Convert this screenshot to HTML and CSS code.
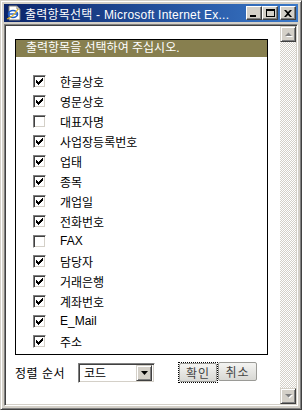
FILE: index.html
```html
<!DOCTYPE html>
<html lang="ko">
<head>
  <meta charset="UTF-8" />
  <title>출력항목선택</title>
  <link rel="stylesheet" href="styles.css">
</head>
<body>
  <div class="window">
    <div class="titlebar">
      <svg class="ie-icon" width="16" height="16" viewBox="0 0 16 16">
        <path d="M3 1h8l3 3v11H3z" fill="#fff" stroke="#808080"/>
        <path d="M11 1v3h3" fill="none" stroke="#808080"/>
        <ellipse cx="7" cy="9" rx="4.5" ry="3.5" fill="none" stroke="#1c5cc8" stroke-width="1.6"/>
        <path d="M3 9h8" stroke="#1c5cc8" stroke-width="1.4"/>
        <path d="M1 14c3-1 8-5 11-10" fill="none" stroke="#e8b820" stroke-width="1.2"/>
      </svg>
      <span class="title">출력항목선택 - Microsoft Internet Ex...</span>
      <div class="caption-btns">
        <span class="cbtn"><i class="min"></i></span>
        <span class="cbtn"><i class="max"></i></span>
        <span class="cbtn close">
          <svg width="8" height="7" viewBox="0 0 8 7"><path d="M0 0h2l2 2 2-2h2L5 3.5 8 7H6L4 5 2 7H0l3-3.5z" fill="#000"/></svg>
        </span>
      </div>
    </div>

    <div class="client">
      <div class="page">
        <div class="panel">
          <div class="panel-head">출력항목을 선택하여 주십시오.</div>
          <ul class="items" id="items"></ul>
        </div>
        <div class="sort-row">
          <span class="sort-label">정렬 순서</span>
          <div class="select">
            <span class="select-text">코드</span>
            <span class="select-btn">
              <svg width="7" height="4" viewBox="0 0 7 4"><path d="M0 0h7L3.5 4z" fill="#000"/></svg>
            </span>
          </div>
          <div class="btns">
            <span class="focus"><button class="btn ok">확인</button></span>
            <button class="btn">취소</button>
          </div>
        </div>
      </div>
      <div class="scrollbar">
        <span class="sbtn">
          <svg width="9" height="6" viewBox="0 0 9 6"><path d="M1 5h7L4.5 1.5z" fill="#fff" transform="translate(1 1)"/><path d="M1 5h7L4.5 1.5z" fill="#808080"/></svg>
        </span>
        <span class="track"></span>
        <span class="sbtn">
          <svg width="9" height="6" viewBox="0 0 9 6"><path d="M1 1h7L4.5 4.5z" fill="#fff" transform="translate(1 1)"/><path d="M1 1h7L4.5 4.5z" fill="#808080"/></svg>
        </span>
      </div>
    </div>
  </div>

<script>
  const fields = [
    { name: "한글상호", on: true },
    { name: "영문상호", on: true },
    { name: "대표자명", on: false },
    { name: "사업장등록번호", on: true },
    { name: "업태", on: true },
    { name: "종목", on: true },
    { name: "개업일", on: true },
    { name: "전화번호", on: true },
    { name: "FAX", on: false },
    { name: "담당자", on: true },
    { name: "거래은행", on: true },
    { name: "계좌번호", on: true },
    { name: "E_Mail", on: true },
    { name: "주소", on: true }
  ];

  // classic 7x7 pixel check mark
  const tick = `<svg width="7" height="7" viewBox="0 0 7 7" shape-rendering="crispEdges" fill="#000">
    <rect x="6" y="0" width="1" height="3"/><rect x="5" y="1" width="1" height="3"/>
    <rect x="4" y="2" width="1" height="3"/><rect x="3" y="3" width="1" height="3"/>
    <rect x="2" y="4" width="1" height="3"/><rect x="1" y="3" width="1" height="3"/>
    <rect x="0" y="2" width="1" height="3"/></svg>`;

  let html = "";
  fields.forEach(f => {
    html += `<li class="item">
      <span class="check">${f.on ? tick : ""}</span>
      <span class="label">${f.name}</span>
    </li>`;
  });
  document.getElementById("items").innerHTML = html;
</script>
</body>
</html>
```

FILE: styles.css
```css
* {
  box-sizing: border-box;
}
body {
  margin: 0;
  font-family: "Liberation Sans", "Noto Sans CJK KR", sans-serif;
  font-size: 12px;
  color: #000;
}
.window {
  width: 302px;
  height: 410px;
  background: #d4d0c8;
  border: 1px solid;
  border-color: #d4d0c8 #404040 #404040 #d4d0c8;
  box-shadow: inset 1px 1px 0 #fff, inset -1px -1px 0 #808080;
  padding: 3px 3px 3px 3px;
  display: flex;
  flex-direction: column;
}
.titlebar {
  height: 18px;
  background: linear-gradient(to right, #0a246a, #3a78c8);
  display: flex;
  align-items: center;
  padding-left: 2px;
  color: #fff;
}
.ie-icon {
  flex: none;
}
.title {
  margin-left: 3px;
  font-size: 12px;
  white-space: nowrap;
  letter-spacing: 0.22px;
  flex: 1;
}
.caption-btns {
  display: flex;
  padding-right: 2px;
}
.cbtn {
  width: 16px;
  height: 14px;
  background: #d4d0c8;
  border: 1px solid;
  border-color: #fff #404040 #404040 #fff;
  box-shadow: inset -1px -1px 0 #808080;
  display: flex;
  align-items: center;
  justify-content: center;
  position: relative;
}
.cbtn.close {
  margin-left: 2px;
}
.cbtn .min {
  position: absolute;
  left: 3px;
  bottom: 2px;
  width: 6px;
  height: 2px;
  background: #000;
}
.cbtn .max {
  width: 9px;
  height: 8px;
  border: 1px solid #000;
  border-top-width: 2px;
}
.client {
  flex: 1;
  margin-top: 2px;
  border: 1px solid;
  border-color: #808080 #fff #fff #808080;
  box-shadow: inset 1px 1px 0 #404040, inset -1px -1px 0 #d4d0c8;
  padding: 1px;
  background: #fff;
  display: flex;
}
.page {
  flex: 1;
  padding: 13px 0 0 9px;
}
.panel {
  width: 253px;
  border: 1px solid #000;
}
.panel-head {
  height: 17px;
  background: #877f4f;
  color: #fff;
  padding-left: 10px;
  line-height: 17px;
}
.items {
  list-style: none;
  margin: 0;
  padding: 14px 0 3px 17px;
}
.item {
  height: 20px;
  display: flex;
  align-items: center;
}
.check {
  width: 13px;
  height: 13px;
  border: 1px solid;
  border-color: #808080 #fff #fff #808080;
  box-shadow: inset 1px 1px 0 #404040, inset -1px -1px 0 #d4d0c8;
  background: #fff;
  display: flex;
  align-items: center;
  justify-content: center;
}
.label {
  margin-left: 14px;
}
.sort-row {
  display: flex;
  align-items: center;
  margin-top: 7px;
}
.sort-label {
  width: 63px;
  letter-spacing: 0.5px;
}
.select {
  width: 77px;
  height: 20px;
  border: 1px solid;
  border-color: #808080 #fff #fff #808080;
  box-shadow: inset 1px 1px 0 #404040, inset -1px -1px 0 #d4d0c8;
  display: flex;
  align-items: center;
  padding: 2px;
}
.select-text {
  flex: 1;
  padding-left: 3px;
}
.select-btn {
  width: 16px;
  height: 16px;
  background: #d4d0c8;
  border: 1px solid;
  border-color: #d4d0c8 #404040 #404040 #d4d0c8;
  box-shadow: inset 1px 1px 0 #fff, inset -1px -1px 0 #808080;
  display: flex;
  align-items: center;
  justify-content: center;
}
.btns {
  display: flex;
  margin-left: 23px;
}
.focus {
  border: 1px dotted #000;
  display: flex;
}
.btn {
  font: inherit;
  color: #444;
  height: 19px;
  width: 39px;
  padding: 0;
  background: linear-gradient(#f4f4f2, #d8d8d4);
  border: 1px solid #9a9a96;
  border-radius: 2px;
  letter-spacing: 1px;
}
.btn.ok {
  width: 38px;
}
.scrollbar {
  width: 16px;
  display: flex;
  flex-direction: column;
}
.sbtn {
  height: 16px;
  background: #d4d0c8;
  border: 1px solid;
  border-color: #d4d0c8 #404040 #404040 #d4d0c8;
  box-shadow: inset 1px 1px 0 #fff, inset -1px -1px 0 #808080;
  display: flex;
  align-items: center;
  justify-content: center;
}
.track {
  flex: 1;
  background: repeating-conic-gradient(#d4d0c8 0 25%, #fff 0 50%) 0 0 / 2px 2px;
}
```
